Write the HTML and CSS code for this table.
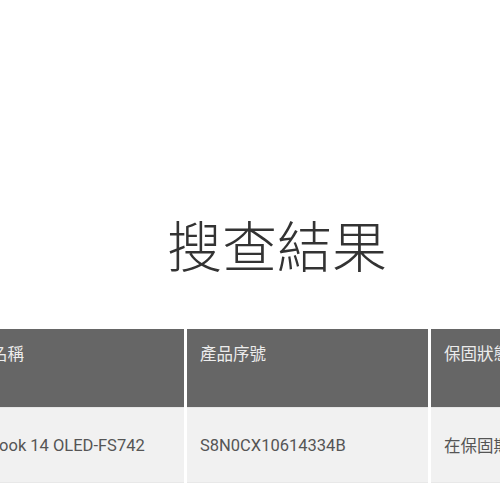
FILE: index.html
```html
<!DOCTYPE html>
<html lang="zh-Hant">
<head>
<meta charset="utf-8">
<link rel="stylesheet" href="styles.css">
</head>
<body>
<main class="page">
  <h1 class="title">搜查結果</h1>
  <div class="results">
    <div class="cell head">產品名稱</div>
    <div class="cell head">產品序號</div>
    <div class="cell head">保固狀態</div>
    <div class="cell body">Vivobook 14 OLED-FS742</div>
    <div class="cell body">S8N0CX10614334B</div>
    <div class="cell body">在保固期內</div>
  </div>
</main>
</body>
</html>
```
FILE: styles.css
```css
html, body {
  margin: 0;
  padding: 0;
  background: #ffffff;
  overflow: hidden;
}
.page {
  width: 500px;
  height: 500px;
  overflow: hidden;
  font-family: Roboto, "Noto Sans CJK TC", sans-serif;
}
.title {
  margin: 0;
  padding-top: 216px;
  padding-left: 167px;
  font-family: "Noto Sans CJK TC", sans-serif;
  font-weight: 300;
  font-size: 55px;
  line-height: 55px;
  color: #333333;
  white-space: nowrap;
}
.results {
  margin-top: 58px;
  margin-left: -55px;
  display: grid;
  grid-template-columns: 239px 241px 241px;
  grid-template-rows: 79px 75px;
  column-gap: 3px;
  width: 730px;
}
.cell {
  padding-left: 13px;
  font-size: 16.5px;
  white-space: nowrap;
}
.head {
  background: #666666;
  color: #ececec;
  padding-top: 14px;
  line-height: 24px;
  border-bottom: 1px solid #e6e6e6;
}
.body {
  background: #f1f1f1;
  color: #555555;
  display: flex;
  align-items: center;
  border-bottom: 1px solid #e8e8e8;
}
```
